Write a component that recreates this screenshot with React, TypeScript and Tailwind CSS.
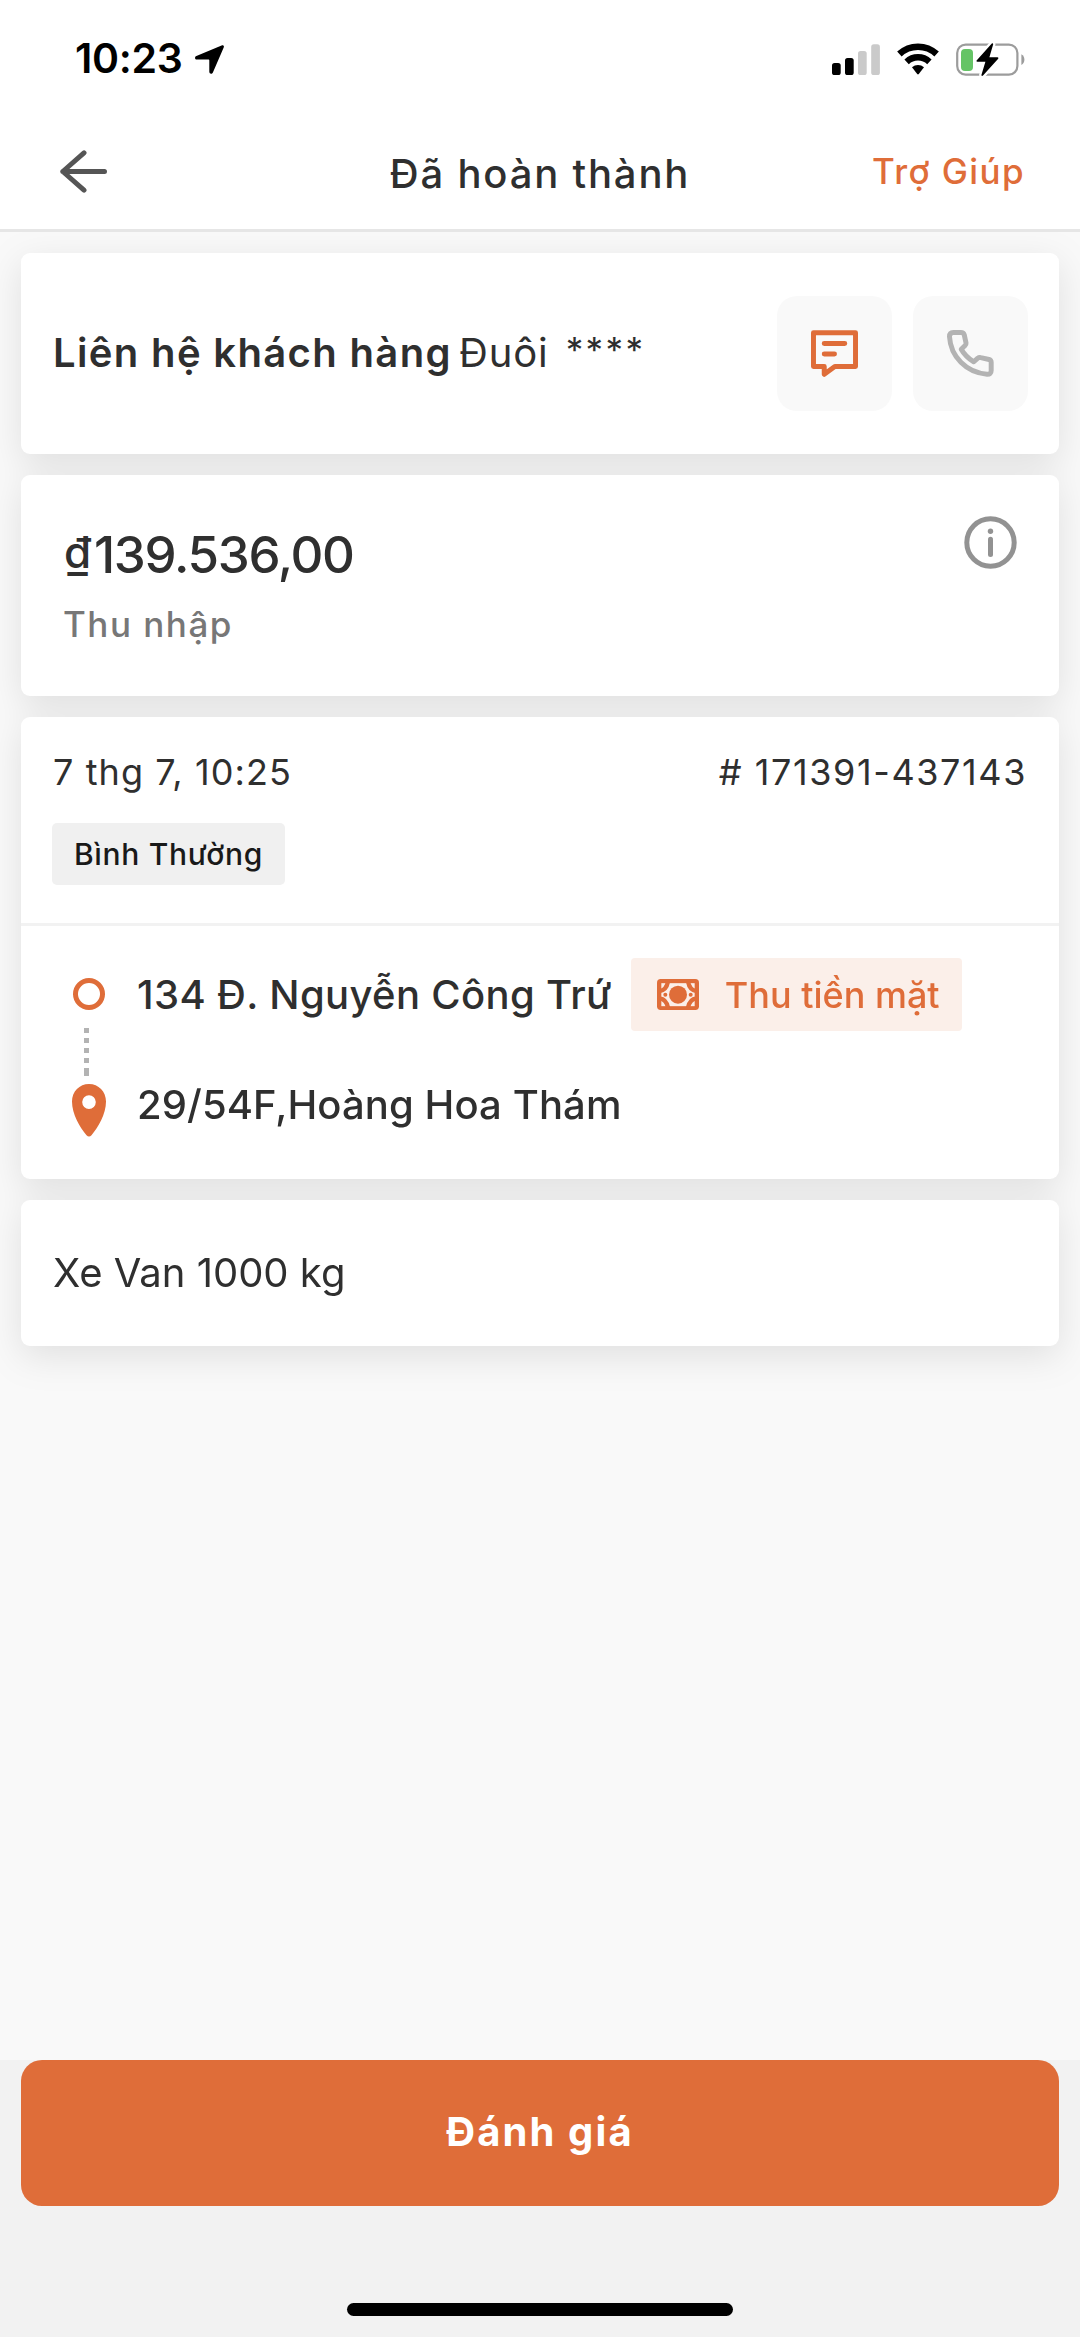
import React from 'react';

interface CardProps {
  className?: string;
  children: React.ReactNode;
}

function Card({ className = '', children }: CardProps) {
  return <section className={`bg-white rounded-[9px] ${className}`}>{children}</section>;
}

function LocationArrow() {
  return (
    <svg className="w-[29px] h-[29px]" viewBox="0 0 29 29" fill="black">
      <path d="M26.6.4C28.3-.3 29.4.9 28.7 2.6L17.9 27.4C17 29.4 14.3 28.9 14.3 26.8V15.6C14.3 14.9 14 14.6 13.3 14.6H2C-.2 14.6-.7 12 1.4 11.1Z" />
    </svg>
  );
}

function SignalIcon() {
  return (
    <svg className="w-12 h-[31px]" viewBox="0 0 48 31">
      <rect x="0" y="19" width="8.7" height="12" rx="2.6" />
      <rect x="13" y="14" width="8.7" height="17" rx="2.6" />
      <rect x="26" y="7" width="8.7" height="24" rx="2.6" fill="#cacaca" />
      <rect x="39.2" y="0.3" width="8.7" height="30.7" rx="2.6" fill="#cacaca" />
    </svg>
  );
}

function WifiIcon() {
  return (
    <svg className="w-[42px] h-8" viewBox="0 0 42 32" fill="none">
      <path d="M2.4 11A27.3 27.3 0 0 1 39.6 11" stroke="black" strokeWidth="6.6" />
      <path d="M9.6 18.8A16.7 16.7 0 0 1 32.4 18.8" stroke="black" strokeWidth="6.4" />
      <path d="M15 24.3A9.2 9.2 0 0 1 27 24.3L21.8 31.1Q21 32 20.2 31.1Z" fill="black" />
    </svg>
  );
}

function BatteryIcon() {
  return (
    <svg className="w-[69px] h-[33px]" viewBox="0 0 69 33">
      <rect x="1.2" y="1.6" width="60.2" height="30" rx="8.5" fill="none" stroke="#9c9c9c" strokeWidth="2.2" />
      <path d="M65.4 11.2Q68.4 13 68.4 16.6T65.4 22Z" fill="#9c9c9c" />
      <rect x="5" y="6" width="12" height="22" rx="4" fill="#65c466" />
      <path
        d="M35.8.4L20.6 17.4Q20 18.6 21.4 18.8H29.4L25.4 32Q25.6 33.4 27 32.6L42.2 15.8Q42.8 14.5 41.4 14.3H33.4L37.2 1.2Q37.1-.2 35.8.4Z"
        fill="black"
        stroke="white"
        strokeWidth="4.5"
        paintOrder="stroke"
      />
    </svg>
  );
}

function BackIcon() {
  return (
    <svg className="w-[47px] h-[43px]" viewBox="0 0 47 43" fill="none" stroke="#555555" strokeWidth="5" strokeLinecap="round" strokeLinejoin="round">
      <path d="M44.5 21.5H2.8M24 2.8L2.8 21.5L24 40.2" />
    </svg>
  );
}

function MessageIcon() {
  return (
    <svg className="w-[47px] h-[47px]" viewBox="0 0 142 142" fill="none" stroke="#df6d39" strokeWidth="15" strokeLinecap="round" strokeLinejoin="round">
      <path d="M7.5 8H134.5V110.5H72L40 134V110.5H7.5Z" />
      <path d="M40 41H102M40 72.5H71" />
    </svg>
  );
}

function PhoneIcon() {
  return (
    <svg className="w-[47px] h-[47px]" viewBox="0 0 142 142" fill="none" stroke="#b3b3b3" strokeWidth="15" strokeLinejoin="round">
      <path d="M19 7.5H42Q50 7.5 52 14L57.5 39Q58 44 54.5 47L43 58Q56 81 81 96L93 85Q97 82 102 83.5L127 89Q133.5 91 133.5 98V122Q133.5 134 121 133.5C58 129 11 80 7.5 20Q7.5 7.5 19 7.5Z" />
    </svg>
  );
}

function InfoIcon() {
  return (
    <svg className="w-[53px] h-[53px]" viewBox="0 0 53 53" fill="none" stroke="#929292">
      <circle cx="26.5" cy="26.5" r="23.7" strokeWidth="5" />
      <path d="M26.5 23.2V38.6" strokeWidth="5" strokeLinecap="round" />
      <circle cx="26.5" cy="15.3" r="2.7" fill="#929292" stroke="none" />
    </svg>
  );
}

function CashIcon() {
  return (
    <svg className="w-[42px] h-[31px]" viewBox="0 0 126 93">
      <rect width="126" height="93" rx="11" fill="#df6d39" />
      <rect x="13" y="12.5" width="100" height="69" fill="#fbefe9" />
      <g fill="none" stroke="#df6d39" strokeWidth="13">
        <path d="M8 36Q28 34 33 8M118 36Q98 34 93 8M8 58Q28 60 33 86M118 58Q98 60 93 86" />
      </g>
      <circle cx="63" cy="47" r="27" fill="#df6d39" />
      <circle cx="25" cy="47" r="6" fill="#df6d39" />
      <circle cx="101" cy="47" r="6" fill="#df6d39" />
    </svg>
  );
}

function PinIcon() {
  return (
    <svg className="w-[34px] h-[53px]" viewBox="0 0 34 53">
      <path
        fillRule="evenodd"
        d="M17 0C26.5 0 34 7.6 34 17.5C34 30 26 43.5 19.5 51.3Q17 53.8 14.5 51.3C8 43.5 0 30 0 17.5C0 7.6 7.5 0 17 0ZM17 11.3A6.8 6.8 0 1 0 17 24.9A6.8 6.8 0 1 0 17 11.3Z"
        fill="#df6d39"
      />
    </svg>
  );
}

function RouteLine() {
  return (
    <div className="flex flex-col gap-[5px] ml-[12px]">
      <span className="w-[5px] h-[5px] bg-[#b3b3b3]" />
      <span className="w-[5px] h-[5px] bg-[#b3b3b3]" />
      <span className="w-[5px] h-[5px] bg-[#b3b3b3]" />
      <span className="w-[5px] h-[5px] bg-[#b3b3b3]" />
      <span className="w-[5px] h-[8px] bg-[#b3b3b3]" />
    </div>
  );
}

export default function App() {
  return (
    <div className="w-[1080px] h-[2337px] flex flex-col bg-[#f9f9f9] text-[#2f2f2f] font-['Inter','Noto_Sans',sans-serif] whitespace-nowrap overflow-hidden">
      <header className="relative z-10 h-[232px] shrink-0 bg-white border-b-3 border-[#e6e6e6]">
        <div className="h-[118px] flex items-center justify-between pl-[75px] pr-[55px]">
          <div className="flex items-center gap-[12px] text-black">
            <span className="text-[41px] font-semibold tracking-[-0.3px]">10:23</span>
            <LocationArrow />
          </div>
          <div className="flex items-center gap-[17px]">
            <SignalIcon />
            <WifiIcon />
            <BatteryIcon />
          </div>
        </div>
        <div className="h-[111px] grid grid-cols-[1fr_auto_1fr] items-center px-[55px]">
          <button className="justify-self-start pl-[5px] pb-[5px]">
            <BackIcon />
          </button>
          <h1 className="text-[40px] font-medium tracking-[1.8px]">Đã hoàn thành</h1>
          <button className="justify-self-end pb-[5px] text-[35px] font-medium tracking-[1.4px] text-[#df6d39]">Trợ Giúp</button>
        </div>
      </header>

      <main className="flex-1 flex flex-col gap-[21px] px-[21px] pt-[21px] drop-shadow-[0_10px_18px_rgba(0,0,0,0.1)]">
        <Card className="h-[201px] flex items-center pl-[32px] pr-[31px]">
          <span className="pb-[2px] text-[40px] font-semibold tracking-[1.35px]">Liên hệ khách hàng</span>
          <span className="pb-[2px] ml-[7px] text-[40px] tracking-[0.9px]">Đuôi</span>
          <span className="pb-[6px] ml-[17px] text-[35px] tracking-[2.4px]">****</span>
          <div className="flex gap-[21px] ml-auto">
            <button className="w-[115px] h-[115px] rounded-[20px] bg-[#f9f9f9] flex items-center justify-center">
              <MessageIcon />
            </button>
            <button className="w-[115px] h-[115px] rounded-[20px] bg-[#f9f9f9] flex items-center justify-center">
              <PhoneIcon />
            </button>
          </div>
        </Card>

        <Card className="h-[221px] flex justify-between items-start pl-[42px] pr-[42px] pt-[41px]">
          <div>
            <p className="flex text-[51px] leading-[78px] font-medium tracking-[-1.3px]">
              <span className="w-[31px] pl-[1px] text-[44px] leading-[73px]">₫</span>
              139.536,00
            </p>
            <p className="text-[35px] leading-[61px] font-medium tracking-[1.5px] text-[#777777]">Thu nhập</p>
          </div>
          <InfoIcon />
        </Card>

        <Card className="h-[462px]">
          <div className="h-[209px] pt-[30px] pl-[31px] pr-[32px] border-b-3 border-[#f2f2f2]">
            <div className="flex justify-between pl-[1px] text-[36px] leading-[50px]">
              <span className="tracking-[1.1px]">7 thg 7, 10:25</span>
              <span className="tracking-[1.6px]"># 171391-437143</span>
            </div>
            <span className="mt-[26px] w-[233px] h-[62px] rounded-[5px] bg-[#f0f0f0] flex items-center justify-center text-[30px] font-medium tracking-[0.7px] text-[#191919]">
              Bình Thường
            </span>
          </div>
          <div className="flex pl-[51px] pt-[32px]">
            <div className="w-[65px] pt-[20px]">
              <div className="w-[32px] h-[32px] ml-[1px] rounded-full border-[5px] border-[#df6d39] mb-[18px]" />
              <RouteLine />
              <div className="mt-[8px]">
                <PinIcon />
              </div>
            </div>
            <div>
              <div className="flex items-center h-[73px]">
                <span className="text-[40px] font-medium tracking-[0.35px]">134 Đ. Nguyễn Công Trứ</span>
                <span className="ml-[19px] w-[331px] h-[73px] rounded-[4px] bg-[#fbefe9] flex items-center pl-[26px] text-[36px] font-medium text-[#df6d39]">
                  <CashIcon />
                  <span className="ml-[26px]">Thu tiền mặt</span>
                </span>
              </div>
              <div className="flex items-center h-[73px] mt-[37px]">
                <span className="text-[40px] font-medium tracking-[0.1px]">29/54F,Hoàng Hoa Thám</span>
              </div>
            </div>
          </div>
        </Card>

        <Card className="h-[146px] flex items-center pl-[32px]">
          <span className="text-[40px]">Xe Van 1000 kg</span>
        </Card>
      </main>

      <footer className="h-[277px] shrink-0 flex flex-col items-center justify-between bg-[#f2f2f2] px-[21px] pb-[21px]">
        <button className="w-full h-[146px] rounded-[21px] bg-[#df6d39] text-white text-[40px] font-bold tracking-[2.1px] pb-[2px]">Đánh giá</button>
        <div className="w-[386px] h-[13px] rounded-full bg-black" />
      </footer>
    </div>
  );
}
